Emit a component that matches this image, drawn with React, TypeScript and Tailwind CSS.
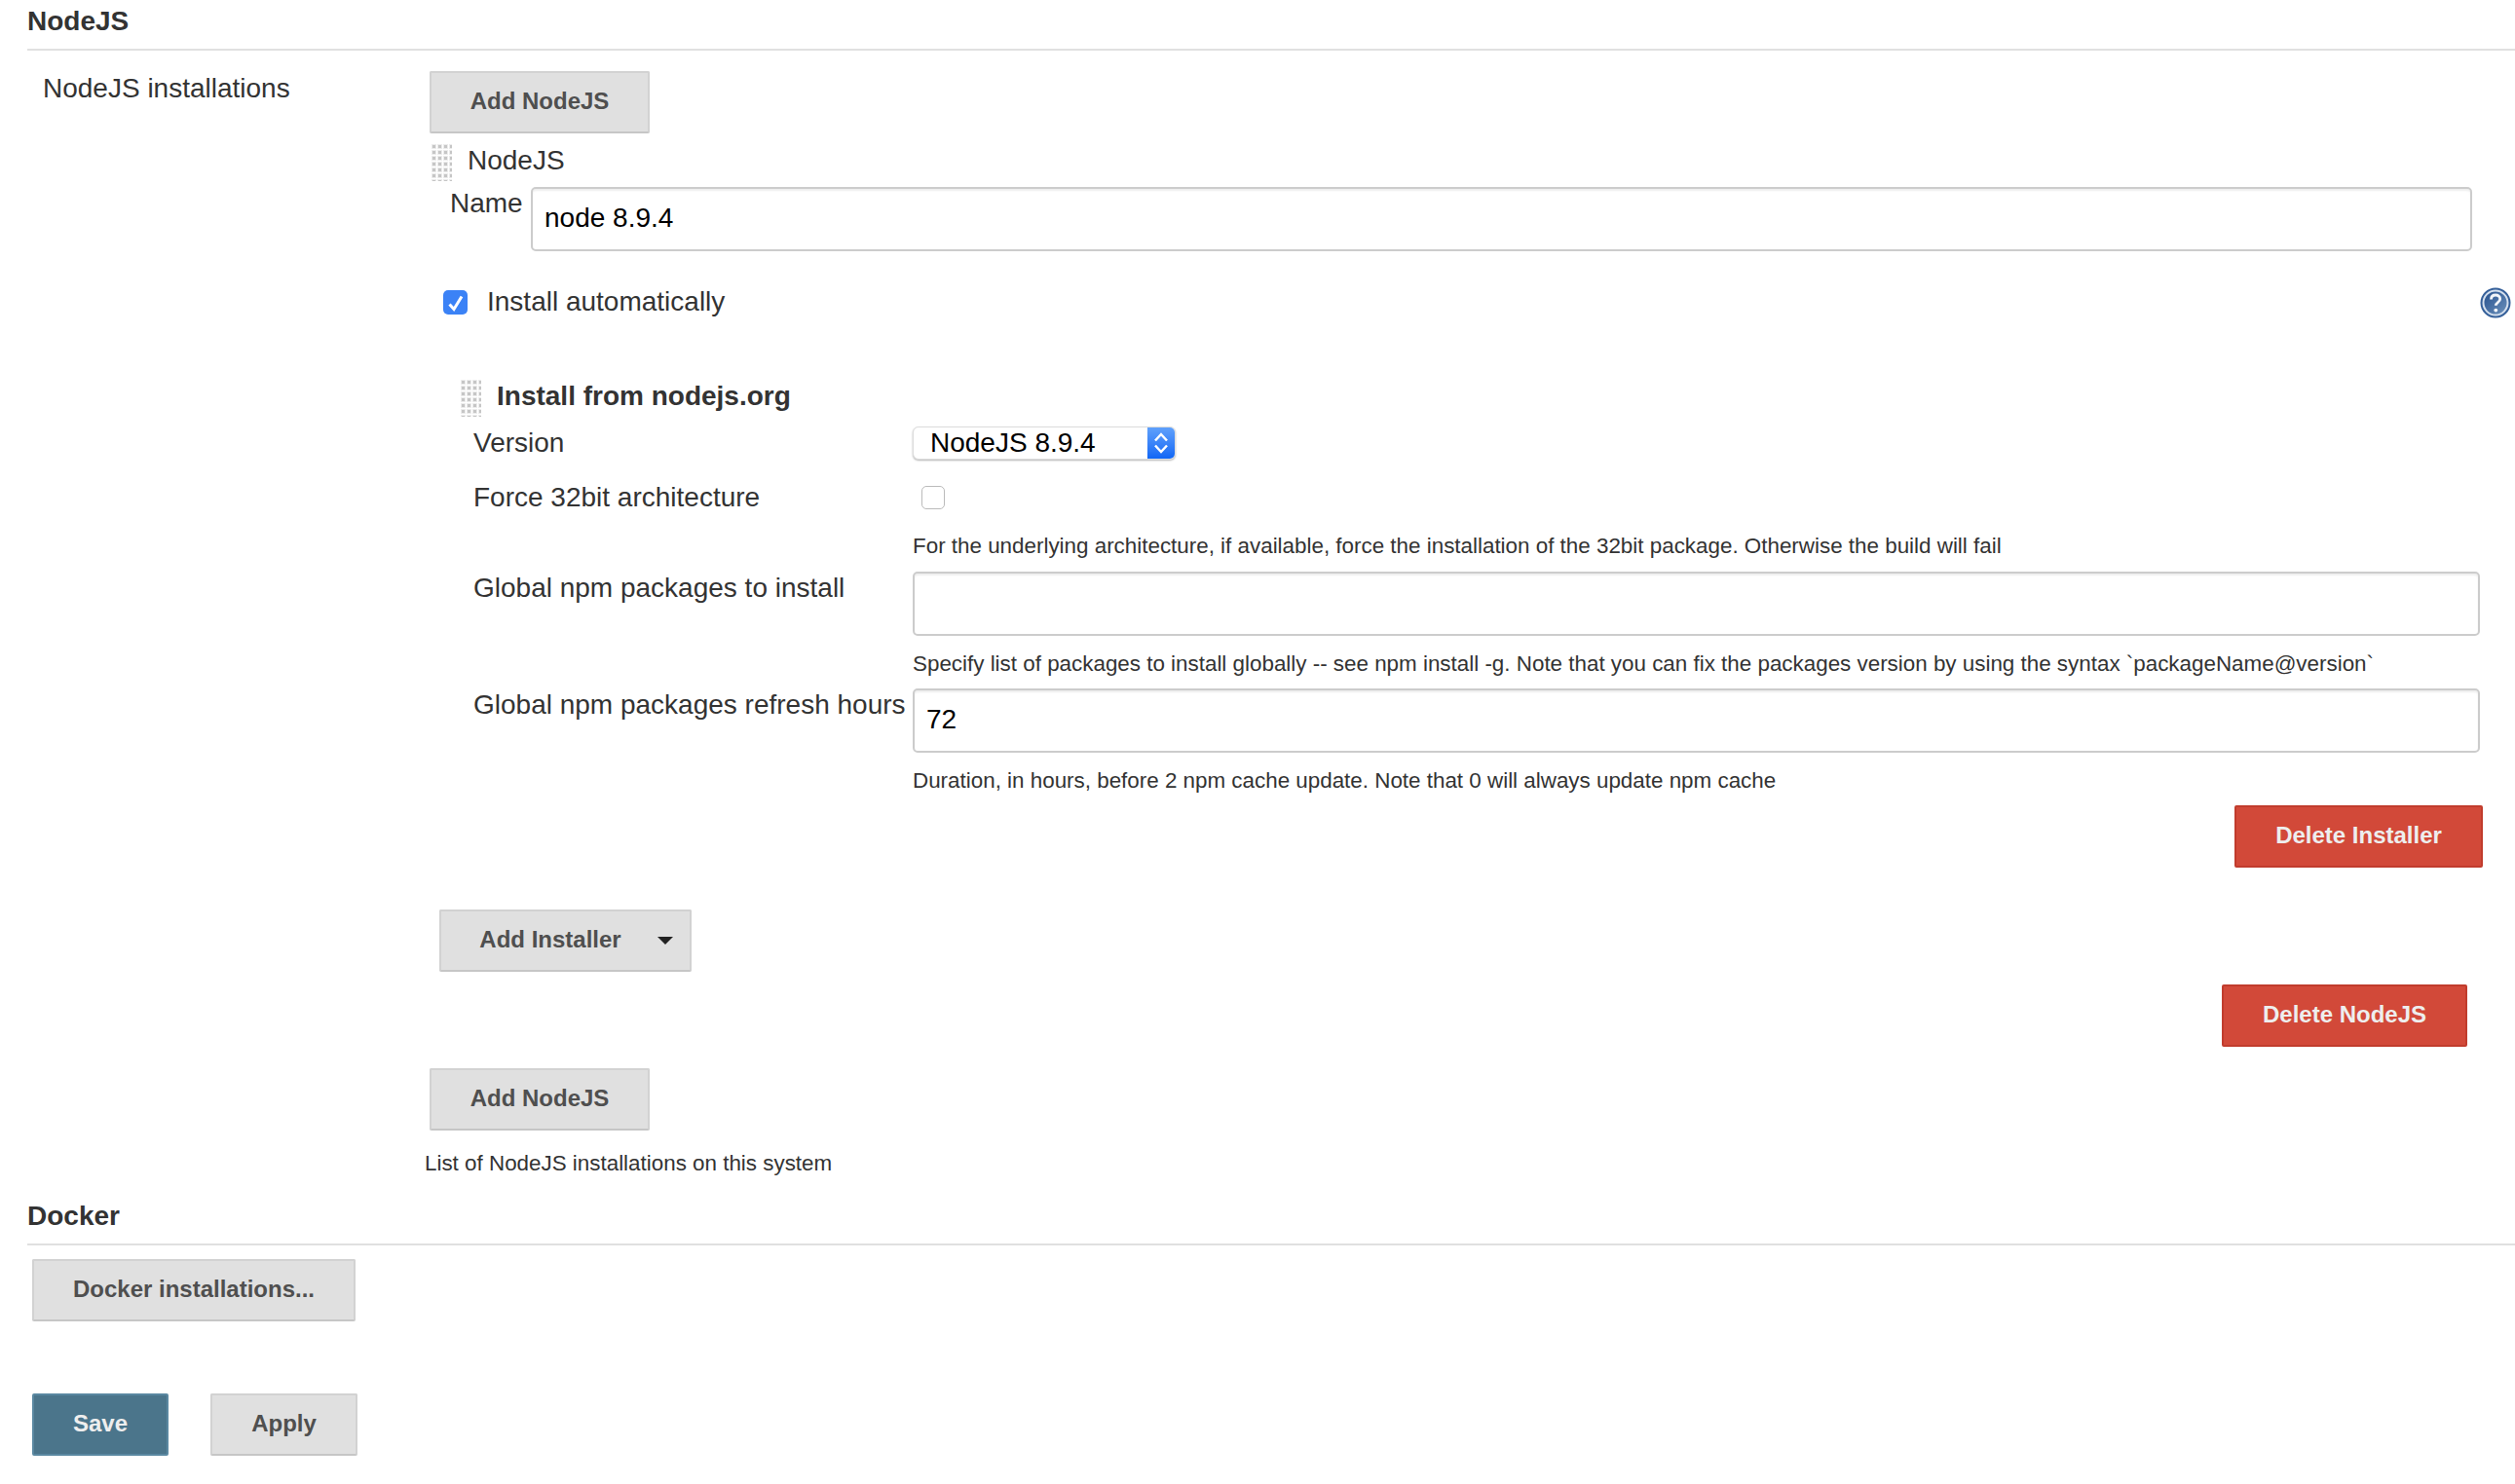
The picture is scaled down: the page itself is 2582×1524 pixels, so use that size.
import React from 'react'

const dotRows = [0, 1, 2, 3, 4, 5, 6]
const dotCols = [0, 1, 2, 3]

function DragHandle({ className = '' }: { className?: string }) {
  return (
    <svg width="22" height="38" viewBox="0 0 22 38" className={`shrink-0 ${className}`}>
      {dotRows.map((r) =>
        dotCols.map((c) => (
          <g key={`${r}-${c}`}>
            <rect x={c * 6 + 1} y={r * 6} width="5" height="5" fill="#ececec" />
            <rect x={c * 6 + 2} y={r * 6 + 1} width="3" height="3" fill="#c6c6c6" />
          </g>
        ))
      )}
    </svg>
  )
}

function GrayButton({ children, className = '' }: { children: React.ReactNode; className?: string }) {
  return (
    <button className={`h-[64px] rounded-[2px] border-2 border-[#d2d2d2] border-b-[#c6c6c6] bg-[#e0e0e0] pb-[3px] text-[24px] font-bold text-[#4f4f4f] ${className}`}>
      {children}
    </button>
  )
}

function RedButton({ children, className = '' }: { children: React.ReactNode; className?: string }) {
  return (
    <button className={`block h-[64px] rounded-[2px] border-2 border-[#c13c2d] bg-[#d24939] pb-[3px] text-[24px] font-bold text-[#eeeeee] ${className}`}>
      {children}
    </button>
  )
}

function TextBox({ value, className = '' }: { value?: string; className?: string }) {
  return (
    <input
      readOnly
      value={value ?? ''}
      className={`block h-[66px] rounded-[5px] border-2 border-[#cccccc] bg-white px-[12px] pb-[2px] text-[28px] text-black shadow-[inset_0_2px_2px_rgba(0,0,0,0.07)] outline-none ${className}`}
    />
  )
}

function SectionHeader({ title, className = '' }: { title: string; className?: string }) {
  return (
    <div className={`ml-[28px] h-[52px] border-b-2 border-[#e0e0e0] pt-[5px] text-[28px] font-bold leading-[34px] text-[#333333] ${className}`}>
      {title}
    </div>
  )
}

function HelpIcon() {
  return (
    <svg width="32" height="32" viewBox="0 0 32 32" className="shrink-0">
      <defs>
        <linearGradient id="helpFill" x1="0" y1="0" x2="1" y2="1">
          <stop offset="0" stopColor="#234f8c" />
          <stop offset="1" stopColor="#6f93bd" />
        </linearGradient>
      </defs>
      <circle cx="16" cy="16" r="15.5" fill="#35609a" />
      <circle cx="16" cy="16" r="12.5" fill="url(#helpFill)" stroke="#d5e0ee" strokeWidth="2" />
      <path d="M11.5 12.5c0-3 2-4.5 4.6-4.5s4.6 1.6 4.6 4c0 3.4-4.4 3.6-4.4 6.8" fill="none" stroke="#f2f5f9" strokeWidth="2.8" />
      <circle cx="16.3" cy="23.6" r="1.9" fill="#f2f5f9" />
    </svg>
  )
}

function HelpText({ children }: { children: React.ReactNode }) {
  return <div className="ml-[451px] h-[34px] text-[22.4px] leading-[34px] text-[#333333]">{children}</div>
}

export default function App() {
  return (
    <div className="h-[1524px] w-[2582px] overflow-hidden bg-white font-['Liberation_Sans',Arial,sans-serif] text-[#333333]">
      <SectionHeader title="NodeJS" />

      <div className="flex pl-[44px] pt-[21px]">
        <div className="w-[397px] pt-[1px] text-[28px] leading-[34px]">NodeJS installations</div>

        <div className="w-[2141px]">
          <GrayButton className="w-[226px]">Add NodeJS</GrayButton>

          <div className="mt-[11px] flex h-[38px] items-start gap-[16px] pl-[1px] text-[28px]">
            <DragHandle />
            <span className="leading-[34px]">NodeJS</span>
          </div>

          <div className="mt-[6px] flex">
            <div className="w-[104px] pl-[21px] text-[28px] leading-[34px]">Name</div>
            <TextBox value="node 8.9.4" className="w-[1993px]" />
          </div>

          {/* install automatically */}
          <div className="relative mt-[35px] flex h-[34px] items-center pl-[14px] text-[28px]">
            <div className="flex h-[25px] w-[25px] items-center justify-center rounded-[5px] bg-[#3b82f6]">
              <svg width="25" height="25" viewBox="0 0 25 25">
                <path d="M6.5 14.5l4.5 5 8-13" fill="none" stroke="white" strokeWidth="3" />
              </svg>
            </div>
            <span className="ml-[20px]">Install automatically</span>
            <div className="absolute right-[4px] top-[2px]">
              <HelpIcon />
            </div>
          </div>

          {/* installer block */}
          <div className="ml-[31px] mt-[61px] flex h-[38px] items-center gap-[16px]">
            <DragHandle className="mt-[4px]" />
            <span className="text-[28px] font-bold">Install from nodejs.org</span>
          </div>

          <div className="ml-[45px] mt-[12px] w-[2060px] text-[28px]">
            <div className="flex h-[34px] items-center">
              <div className="w-[451px]">Version</div>
              <div className="flex h-[34px] w-[270px] overflow-hidden rounded-[6px] border border-[#dddddd] bg-white shadow-[0_1px_2px_rgba(0,0,0,0.3)]">
                <div className="flex-1 pl-[17px] leading-[32px] text-black">NodeJS 8.9.4</div>
                <div className="flex w-[28px] items-center justify-center bg-gradient-to-b from-[#5fa0fb] to-[#0f66f5]">
                  <svg width="16" height="26" viewBox="0 0 16 26">
                    <path d="M2 10.5l6-6.5 6 6.5M2 15.5l6 6.5 6-6.5" fill="none" stroke="white" strokeWidth="2.5" />
                  </svg>
                </div>
              </div>
            </div>

            <div className="mt-[22px] flex h-[34px] items-center">
              <div className="w-[451px]">Force 32bit architecture</div>
              <div className="ml-[9px] h-[24px] w-[24px] rounded-[5px] border border-[#bbbbbb] bg-white" />
            </div>

            <div className="mt-[16px]">
              <HelpText>For the underlying architecture, if available, force the installation of the 32bit package. Otherwise the build will fail</HelpText>
            </div>

            <div className="mt-[9px] flex">
              <div className="w-[451px] leading-[34px]">Global npm packages to install</div>
              <TextBox className="w-[1609px]" />
            </div>
            <div className="mt-[12px]">
              <HelpText>Specify list of packages to install globally -- see npm install -g. Note that you can fix the packages version by using the syntax `packageName@version`</HelpText>
            </div>

            <div className="mt-[8px] flex">
              <div className="w-[451px] leading-[34px]">Global npm packages refresh hours</div>
              <TextBox value="72" className="w-[1609px]" />
            </div>
            <div className="mt-[12px]">
              <HelpText>Duration, in hours, before 2 npm cache update. Note that 0 will always update npm cache</HelpText>
            </div>

            <RedButton className="ml-[1808px] mt-[8px] w-[255px]">Delete Installer</RedButton>
          </div>

          <GrayButton className="relative ml-[10px] mt-[43px] w-[259px] pr-[31px]">
            Add Installer
            <span className="absolute right-[17px] top-[26px] h-0 w-0 border-x-[8px] border-t-[8px] border-x-transparent border-t-[#222222]" />
          </GrayButton>

          <RedButton className="ml-[1840px] mt-[13px] w-[252px]">Delete NodeJS</RedButton>

          <GrayButton className="mt-[22px] w-[226px]">Add NodeJS</GrayButton>

          <div className="-ml-[5px] mt-[17px] h-[34px] text-[22.4px] leading-[34px]">List of NodeJS installations on this system</div>
        </div>
      </div>

      <SectionHeader title="Docker" className="mt-[15px]" />

      <GrayButton className="ml-[33px] mt-[14px] block w-[332px]">Docker installations...</GrayButton>

      <div className="ml-[33px] mt-[74px] flex gap-[43px]">
        <button className="h-[64px] w-[140px] rounded-[2px] border-2 border-[#5a88a1] bg-[#4b758b] pb-[3px] text-[24px] font-bold text-[#eeeeee]">Save</button>
        <GrayButton className="w-[151px]">Apply</GrayButton>
      </div>
    </div>
  )
}
